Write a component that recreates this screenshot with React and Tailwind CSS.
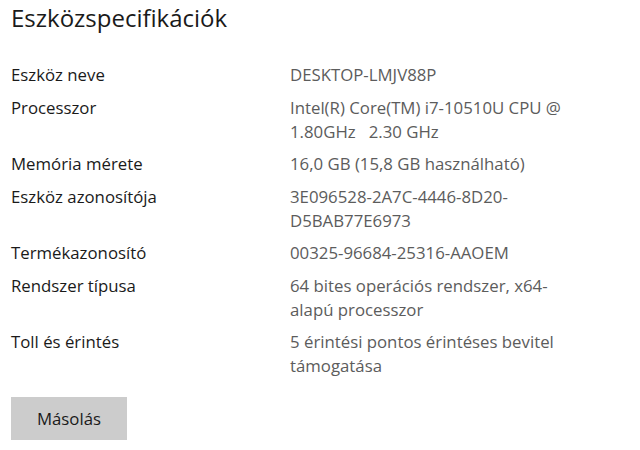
import React from "react";

const rows = [
  ["Eszköz neve", ["DESKTOP-LMJV88P"]],
  ["Processzor", ["Intel(R) Core(TM) i7-10510U CPU @", "1.80GHz\u00a0\u00a0 2.30 GHz"]],
  ["Memória mérete", ["16,0 GB (15,8 GB használható)"]],
  ["Eszköz azonosítója", ["3E096528-2A7C-4446-8D20-", "D5BAB77E6973"]],
  ["Termékazonosító", ["00325-96684-25316-AAOEM"]],
  ["Rendszer típusa", ["64 bites operációs rendszer, x64-", "alapú processzor"]],
  ["Toll és érintés", ["5 érintési pontos érintéses bevitel", "támogatása"]],
];

export default function App() {
  return (
    <div className="w-[640px] h-[450px] bg-white overflow-hidden font-['Segoe_UI','Open_Sans',sans-serif] pl-[11px] pt-[2px]">
      <h1 className="text-[24px] leading-[32px] text-[#1a1a1a] font-normal">Eszközspecifikációk</h1>
      <div className="mt-[29px] flex flex-col gap-[8.5px] text-[16.8px] leading-[24px]">
        {rows.map(([label, value]) => (
          <div key={label} className="flex">
            <div className="w-[279px] shrink-0 text-[#1a1a1a]">{label}</div>
            <div className="text-[#5c5c5c] whitespace-nowrap">
              {value.map((v, i) => (
                <div key={i}>{v}</div>
              ))}
            </div>
          </div>
        ))}
      </div>
      <button className="mt-[19px] w-[116px] h-[43px] bg-[#cccccc] text-[16.8px] text-[#1a1a1a]">Másolás</button>
    </div>
  );
}
